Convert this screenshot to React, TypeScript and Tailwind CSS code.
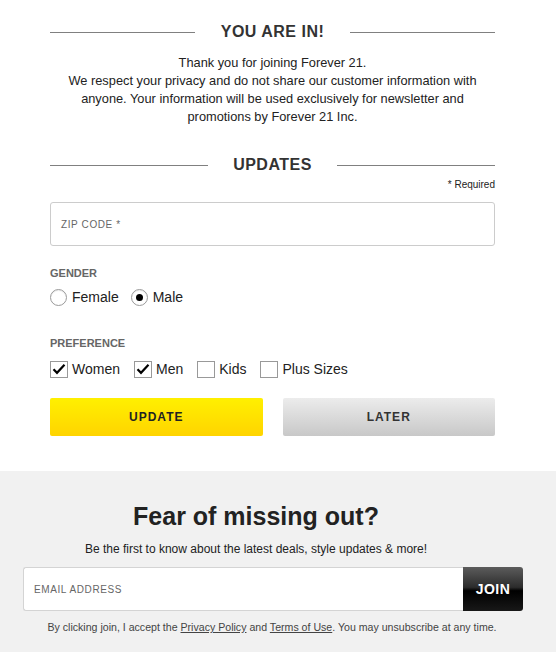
import React, { useState } from 'react';

function SectionTitle({ title, gap }: { title: string; gap: string }) {
    return (
        <div className={`flex items-center h-5 ${gap}`}>
            <div className="flex-1 h-px bg-[#808080]" />
            <h2 className="text-[16px] leading-5 font-bold tracking-[0.5px] text-[#333]">{title}</h2>
            <div className="flex-1 h-px bg-[#808080]" />
        </div>
    );
}

function Radio({ label, checked, onClick }: { label: string; checked: boolean; onClick: () => void }) {
    return (
        <button onClick={onClick} className="flex items-center gap-[5px] h-5">
            <span className="w-[17px] h-[17px] rounded-full border border-[#9a9a9a] bg-white flex items-center justify-center shadow-[inset_0_1px_1px_rgba(0,0,0,0.08)]">
                {checked && <span className="w-[7px] h-[7px] rounded-full bg-black" />}
            </span>
            <span className="text-[14px] text-[#222]">{label}</span>
        </button>
    );
}

function Check({ label, checked, onClick }: { label: string; checked: boolean; onClick: () => void }) {
    return (
        <button onClick={onClick} className="flex items-center gap-1 h-5">
            <span className="w-[18px] h-[17px] border border-[#999] bg-white flex items-center justify-center">
                {checked && (
                    <svg width="14" height="12" viewBox="0 0 14 12">
                        <path d="M1.5 6.2 L5 9.8 L12.5 1.8" fill="none" stroke="#000" strokeWidth="2.2" />
                    </svg>
                )}
            </span>
            <span className="text-[14px] text-[#222]">{label}</span>
        </button>
    );
}

export default function App() {
    const [gender, setGender] = useState('male');
    const [prefs, setPrefs] = useState<Record<string, boolean>>({
        Women: true,
        Men: true,
        Kids: false,
        'Plus Sizes': false,
    });

    const togglePref = (key: string) => setPrefs({ ...prefs, [key]: !prefs[key] });

    return (
        <div className="w-[556px] min-h-[652px] bg-white font-['Liberation_Sans',Arial,sans-serif] text-[#222]">
            <div className="pl-[50px] pt-[22px]">
                <div className="w-[445px]">
                    <SectionTitle title="YOU ARE IN!" gap="gap-[26px]" />

                    <p className="mt-3 text-[12.8px] leading-[18px] text-center text-[#222]">
                        Thank you for joining Forever 21.
                        <br />
                        We respect your privacy and do not share our customer information with anyone. Your
                        information will be used exclusively for newsletter and promotions by Forever 21 Inc.
                    </p>

                    <div className="mt-[29px]">
                        <SectionTitle title="UPDATES" gap="gap-[25px]" />
                    </div>

                    <div className="mt-[3px] text-right text-[10px] leading-[14px] text-[#222]">* Required</div>

                    <div className="mt-[10px] h-[44px] border border-[#ccc] rounded-[3px] flex items-center px-[10px]">
                        <span className="text-[10px] tracking-[0.6px] text-[#666]">ZIP CODE *</span>
                    </div>

                    <div className="mt-5 text-[11px] leading-[14px] font-bold text-[#666]">GENDER</div>
                    <div className="mt-[7px] flex gap-[12px]">
                        <Radio label="Female" checked={gender === 'female'} onClick={() => setGender('female')} />
                        <Radio label="Male" checked={gender === 'male'} onClick={() => setGender('male')} />
                    </div>

                    <div className="mt-[29px] text-[11px] leading-[14px] font-bold text-[#666]">PREFERENCE</div>
                    <div className="mt-[9px] flex gap-[14px]">
                        {Object.keys(prefs).map((key) => (
                            <Check key={key} label={key} checked={prefs[key]} onClick={() => togglePref(key)} />
                        ))}
                    </div>

                    <div className="mt-[19px] flex gap-5">
                        <button className="flex-1 h-[38px] rounded-[2px] bg-[linear-gradient(to_bottom,#fff000,#ffd400)] text-[12px] font-bold tracking-[1px] text-[#222]">
                            UPDATE
                        </button>
                        <button className="flex-1 h-[38px] rounded-[2px] bg-[linear-gradient(to_bottom,#ececec,#c8c8c8)] text-[12px] font-bold tracking-[1px] text-[#333]">
                            LATER
                        </button>
                    </div>
                </div>
            </div>

            <div className="mt-[35px] bg-[#f1f1f1] pt-[30px] pb-[18px]">
                <div className="pr-[44px]">
                    <h1 className="text-[25px] leading-[30px] font-bold text-center text-[#222]">Fear of missing out?</h1>
                    <p className="mt-[9px] text-[12px] leading-[18px] text-center text-[#222]">
                        Be the first to know about the latest deals, style updates &amp; more!
                    </p>
                </div>

                <div className="mt-[9px] ml-[23px] w-[500px] h-[44px] flex">
                    <div className="flex-1 bg-white border border-[#d4d4d4] border-r-0 rounded-l-[3px] flex items-center px-[10px]">
                        <span className="text-[10px] tracking-[0.6px] text-[#666]">EMAIL ADDRESS</span>
                    </div>
                    <button className="w-[60px] rounded-r-[3px] bg-[linear-gradient(to_bottom,#5c5c5c,#2c2c2c_46%,#000_54%,#181818)] text-white text-[14px] font-bold tracking-[0.5px]">
                        JOIN
                    </button>
                </div>

                <p className="mt-[9px] pr-[12px] text-[10.6px] leading-[14px] text-center text-[#444]">
                    By clicking join, I accept the <a className="underline">Privacy Policy</a> and{' '}
                    <a className="underline">Terms of Use</a>. You may unsubscribe at any time.
                </p>
            </div>
        </div>
    );
}
